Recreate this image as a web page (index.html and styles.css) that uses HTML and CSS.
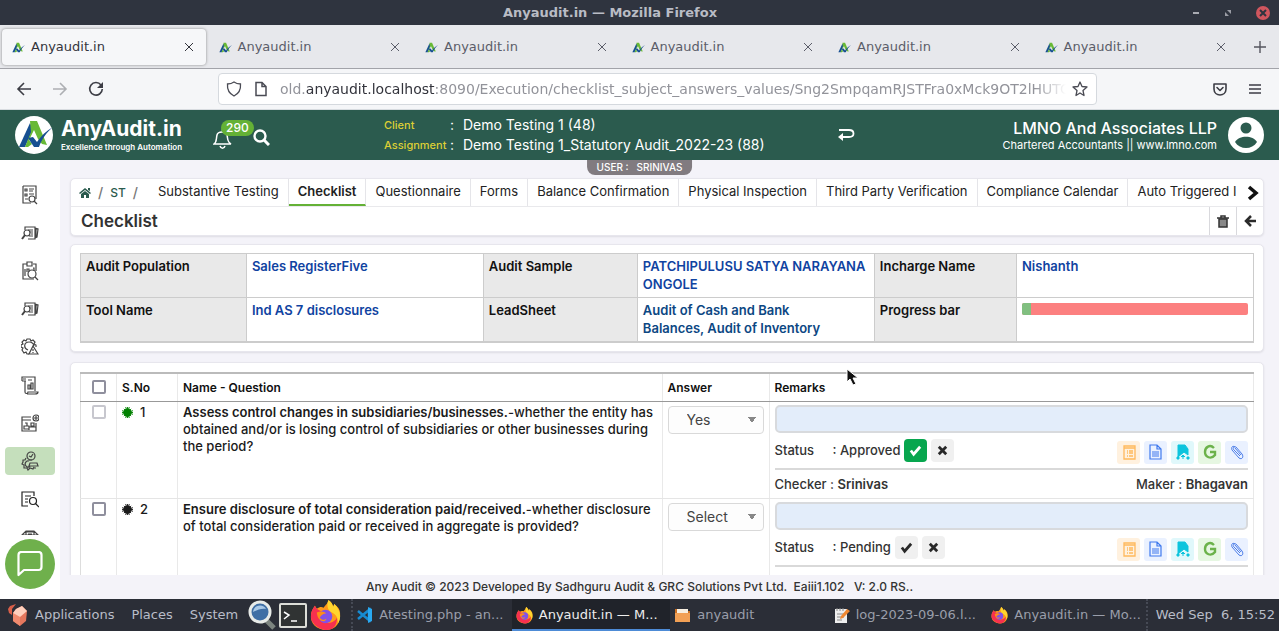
FILE: index.html
```html
<!DOCTYPE html>
<html lang="en">
<head>
<meta charset="utf-8">
<title>Anyaudit.in</title>
<link rel="stylesheet" href="styles.css">
</head>
<body>
<svg class="sprite" aria-hidden="true">
  <symbol id="logo" viewBox="0 0 38 38"><path d="M15 7 18 13 10 31H4z" fill="#164f91"/><path d="M15 5h7l10 24-5-1-4-5-4-9-5 10 3 4-4 3h-3l6-15z" fill="#68b936"/><path d="m13 22 5-1 4 5c4-6 9-11 16-15-7 6-11 12-14 20h-5z" fill="#164f91"/></symbol>
  <symbol id="mini-logo" viewBox="3 4 35 28"><use href="#logo" width="38" height="38"/></symbol>
  <symbol id="close" viewBox="0 0 10 10"><path d="m1 1 8 8M9 1 1 9" stroke="currentColor" fill="none"/></symbol>
  <symbol id="fox" viewBox="0 0 32 32"><path d="M31 13c1 10-4 18-14 18S0 24 1 16c0-4 2-7 4-10l2 3c3-2 5-2 7-1 2-3 5-5 5-8 3 2 4 4 5 7l1-3c4 3 6 6 6 9z" fill="#ff9819"/><path d="M1 16c0-4 2-7 4-10l2 3 5 3c1 5-2 9 3 11 6 2 11-1 13-5 0 8-4 13-11 13S0 24 1 16z" fill="#f7304f"/><path d="M19 0c3 2 4 4 5 7l1-3c6 5 8 14 4 20 0-7-3-10-8-12-3-2-4-8-2-12z" fill="#ffd52e"/><circle cx="16" cy="17" r="7" fill="#8151e9"/><path d="M7 13c4-2 8-1 10 1-4 0-5 2-7 4 2 3 5 3 7 1-1 5-9 4-10-6z" fill="#ff8d17"/></symbol>
  <symbol id="report" viewBox="0 0 18 20"><path d="M2 1h13v13M2 1v17h8M4 4h2v2H4zM8 4h5M8 6h4M4 9h2v2H4zM8 9h5M4 14h3"/><circle cx="11" cy="14" r="3"/><path d="m13 16 3 3"/></symbol>
  <symbol id="papers" viewBox="0 0 18 20"><path d="M4 7V4h10v12H7M14 5l3 1-1 8-2 1M15 5v10M7 7h5M9 9h3M10 11h2M8 13h4"/><circle cx="6" cy="10" r="3"/><path d="m4 12-3 4" stroke-width="2"/></symbol>
  <symbol id="clip" viewBox="0 0 18 20"><path d="M6 3H2v15h11M12 3h3v7M6 1h5v4H6zM4 8v7M6 11V8h2v3M12 7h1v3"/><circle cx="11" cy="13" r="4"/><path d="m14 16 3 3"/></symbol>
  <symbol id="risk" viewBox="0 0 18 20"><path d="M8 17H6l-1-2-2 1-2-3 1-2-2-1v-2l2-1-1-2 2-2 2 1 1-2h3l1 2 2-1 2 2-1 2 2 1v2"/><path d="M7 13c-5-2-4-8 1-8 3 0 5 2 5 4M12 9l5 8H8zM12 12v2M12 15v1"/></symbol>
  <symbol id="chart" viewBox="0 0 18 20"><path d="M1 6V2h13v14M4 6v11c0 2 3 2 3 0h10c0 2-1 2-3 2H6M1 6h4M7 14v-4h2v4zM10 14V8h2v6zM7 5h4M2 4h3"/></symbol>
  <symbol id="team" viewBox="0 0 18 20"><path d="M10 4H1v14h14v-8M1 7h9M4 10h2v3H3v3h5v-3H6M10 10h3v3h-3zM8 17v-3h7"/><circle cx="15" cy="5" r="3"/><path d="M15 3v4M13 5h4"/></symbol>
  <symbol id="gears" viewBox="0 0 18 20"><circle cx="10" cy="5" r="4"/><path d="m8 5 2 1 2-3M5 7 4 9H2v2L1 13l2 1v3h3l1 2 2-2 3 1 1-2M8 10c-3-1-5 3-3 5 1 2 4 1 4 0M9 12h7l1 3H8zM8 9h3M12 17h3"/></symbol>
  <symbol id="search-doc" viewBox="0 0 18 20"><path d="M7 17H1V3h12v4M4 7h6M4 10h3M4 13h3"/><circle cx="12" cy="12" r="3.5"/><path d="m14 14 4 4"/></symbol>
  <symbol id="burst" viewBox="0 0 12 12"><circle cx="6" cy="6" r="4.500" fill="currentColor"/><path d="M6 0v12M0 6h12M2 2l8 8M10 2l-8 8M4 0l4 12M8 0 4 12M0 4l12 4M0 8l12-4" stroke="currentColor"/></symbol>
  <symbol id="check" viewBox="0 0 14 14"><path d="m2 7 3 4 7-8" fill="none" stroke="currentColor" stroke-width="3"/></symbol>
  <symbol id="cross" viewBox="0 0 14 14"><path d="m3 3 8 8m0-8-8 8" fill="none" stroke="currentColor" stroke-width="3"/></symbol>
  <symbol id="list" viewBox="0 0 14 16"><path d="M2 2h11v13H2zM2 4h11M5 7h1M7 7h4M5 9h1M7 9h4M5 12h1M7 12h4" fill="none" stroke="#ffb95c" stroke-width="1.3"/></symbol>
  <symbol id="doc" viewBox="0 0 14 16"><path d="M1 1h7l4 4v10H1zM8 1v4h4M3 8h7M3 10h7M3 12h7" fill="none" stroke="#3e79ee" stroke-width="1.200"/></symbol>
  <symbol id="upload" viewBox="0 0 14 16"><path d="M2 1h7l3 4v6L8 8l-6 5zM1 13h2v2H1zM11 13h2v2h-2zM7 15v-4m-2 2 2-2 2 2" fill="#0cc4dd" stroke="#0cc4dd"/></symbol>
  <symbol id="google" viewBox="0 0 14 16"><path d="M11 4C7 0 2 3 2 8s6 8 10 3V8H7" fill="none" stroke="#6bb24a" stroke-width="2.4"/></symbol>
  <symbol id="attach" viewBox="0 0 14 16"><path d="M5 3c-3-2-4 1-3 3l7 8c3 2 5-1 3-4L6 3c-2-1-4 1-2 3l6 6M5 4l6 7" fill="none" stroke="#4b7de9"/></symbol>
</svg>

<header class="titlebar">
  <span class="titlebar-text">Anyaudit.in — Mozilla Firefox</span>
  <div class="window-buttons">
    <button aria-label="Minimize"><svg width="8" height="10"><path d="M1 5h6" stroke="#a9abb2" stroke-width="2"/></svg></button>
    <button aria-label="Restore"><svg width="8" height="8"><path d="M3 1h4v4zM1 3l4 4H1z" fill="#9b9da5"/></svg></button>
    <button aria-label="Close window"><svg width="14" height="14"><circle cx="7" cy="7" r="7" fill="#d0565e"/><path d="m4 4 6 6m0-6-6 6" stroke="#2f343f" stroke-width="2"/></svg></button>
  </div>
</header>

<nav class="browser-tabs" aria-label="Browser tabs">
  <div class="browser-tab current"><svg class="favicon"><use href="#mini-logo"/></svg><span>Anyaudit.in</span><button aria-label="Close tab"><svg><use href="#close"/></svg></button></div>
  <div class="browser-tab"><svg class="favicon"><use href="#mini-logo"/></svg><span>Anyaudit.in</span><button aria-label="Close tab"><svg><use href="#close"/></svg></button></div>
  <div class="browser-tab"><svg class="favicon"><use href="#mini-logo"/></svg><span>Anyaudit.in</span><button aria-label="Close tab"><svg><use href="#close"/></svg></button></div>
  <div class="browser-tab"><svg class="favicon"><use href="#mini-logo"/></svg><span>Anyaudit.in</span><button aria-label="Close tab"><svg><use href="#close"/></svg></button></div>
  <div class="browser-tab"><svg class="favicon"><use href="#mini-logo"/></svg><span>Anyaudit.in</span><button aria-label="Close tab"><svg><use href="#close"/></svg></button></div>
  <div class="browser-tab"><svg class="favicon"><use href="#mini-logo"/></svg><span>Anyaudit.in</span><button aria-label="Close tab"><svg><use href="#close"/></svg></button></div>
  <button class="new-tab" aria-label="New tab"><svg width="12" height="12"><path d="M6 0v12M0 6h12" stroke="#55565f" stroke-width="1.4"/></svg></button>
</nav>

<div class="toolbar">
  <div class="nav-buttons">
    <button aria-label="Back"><svg width="16" height="16"><path d="M15 8H2m6-6L2 8l6 6" fill="none" stroke="#3c3d45" stroke-width="1.6"/></svg></button>
    <button aria-label="Forward"><svg width="16" height="16"><path d="M1 8h13M8 2l6 6-6 6" fill="none" stroke="#adafb3" stroke-width="1.6"/></svg></button>
    <button aria-label="Reload"><svg width="16" height="16"><path d="M13 4a6.300 6.300 0 1 0 1.300 4" fill="none" stroke="#3c3d45" stroke-width="1.6"/><path d="M15 1v6H9z" fill="#3c3d45"/></svg></button>
  </div>
  <div class="address">
    <svg width="16" height="16"><path d="M8 1c2 1.500 4 2 6.500 2C15 9 12 13 8 15 4 13 1 9 1.500 3 4 3 6 2.500 8 1z" fill="none" stroke="#4a4b54" stroke-width="1.300"/></svg>
    <svg width="14" height="16"><path d="M2 1.500h6l4 4v9H2zM8 1.500v4h4" fill="none" stroke="#4a4b54" stroke-width="1.500"/></svg>
    <div class="url">old.<b>anyaudit.localhost</b>:8090/Execution/checklist_subject_answers_values/Sng2SmpqamRJSTFra0xMck9OT2lHUTC</div>
    <button aria-label="Bookmark"><svg width="16" height="16"><path d="m8 1 2 4.500 5 .5-4 3.500 1 5L8 12l-4 2.500 1-5L1 6l5-.5z" fill="none" stroke="#4a4b54" stroke-width="1.300" stroke-linejoin="round"/></svg></button>
  </div>
  <div class="tool-buttons">
    <button aria-label="Pocket"><svg width="14" height="14"><path d="M1 2h12v5c0 4-3 6-6 6s-6-2-6-6zM4 5.500l3 3 3-3" fill="none" stroke="#3c3d45" stroke-width="1.600" stroke-linecap="round" stroke-linejoin="round"/></svg></button>
    <button aria-label="Menu"><svg width="12" height="12"><path d="M0 2h12M0 6h12M0 10h12" stroke="#3c3d45" stroke-width="1.500"/></svg></button>
  </div>
</div>

<header class="app-header">
  <a class="brand" href="#">
    <span class="brand-mark"><svg><use href="#logo"/></svg></span>
    <span class="brand-words"><strong>AnyAudit.in</strong><small>Excellence through Automation</small></span>
  </a>
  <div class="header-tools">
    <button class="bell" aria-label="Notifications"><svg width="19" height="24"><path d="M1 18c3-2 2-5 3-9 1-4 9-4 10 0 1 4 0 7 4 9zM7 20c1 3 4 3 5 0M9.500 5V3" fill="none" stroke="#fff" stroke-width="1.500"/></svg><span class="badge">290</span></button>
    <button aria-label="Search"><svg width="17" height="17"><circle cx="7" cy="7" r="5.500" fill="none" stroke="#fff" stroke-width="2.400"/><path d="m11 11 5 5" stroke="#fff" stroke-width="3"/></svg></button>
  </div>
  <dl class="engagement">
    <dt>Client</dt><dd><span>:</span>Demo Testing 1 (48)</dd>
    <dt>Assignment</dt><dd><span>:</span>Demo Testing 1_Statutory Audit_2022-23 (88)</dd>
  </dl>
  <button class="switch" aria-label="Switch assignment"><svg width="17" height="16"><path d="M1 3h10c6 0 6 7 0 7H4" fill="none" stroke="#fff" stroke-width="1.800"/><path d="M0 10 5 6v8z" fill="#fff"/></svg></button>
  <div class="firm"><strong>LMNO And Associates LLP</strong><small>Chartered Accountants || www.lmno.com</small></div>
  <button class="avatar" aria-label="Profile"><svg width="36" height="36"><circle cx="18" cy="18" r="18" fill="#fff"/><circle cx="18" cy="11" r="5.500" fill="#2b5b4e"/><path d="M7 25c4-7 18-7 22 0-5 8-17 8-22 0z" fill="#2b5b4e"/></svg></button>
  <div class="user-chip">USER :&nbsp;&nbsp; SRINIVAS</div>
</header>

<div class="workspace">
  <aside class="sidebar">
    <nav class="side-nav" aria-label="Sections">
      <a href="#" aria-label="Reports"><svg><use href="#report"/></svg></a>
      <a href="#" aria-label="Papers"><svg><use href="#papers"/></svg></a>
      <a href="#" aria-label="Analysis"><svg><use href="#clip"/></svg></a>
      <a href="#" aria-label="Review"><svg><use href="#papers"/></svg></a>
      <a href="#" aria-label="Risk"><svg><use href="#risk"/></svg></a>
      <a href="#" aria-label="Statements"><svg><use href="#chart"/></svg></a>
      <a href="#" aria-label="Team"><svg><use href="#team"/></svg></a>
      <a href="#" aria-label="Execution" class="active"><svg><use href="#gears"/></svg></a>
      <a href="#" aria-label="Search documents" class="dark"><svg><use href="#search-doc"/></svg></a>
      <a href="#" aria-label="Archive"><svg viewBox="0 0 18 20"><path d="M1 8 5 4h8l4 4M5 8V5h8v3M7 7h4M1 8h16v5H1z"/></svg></a>
    </nav>
    <button class="chat" aria-label="Chat"><svg width="26" height="26"><path d="M1.500 24V4c0-2 1-3 3-3h17c2 0 3 1 3 3v12c0 2-1 3-3 3H7z" fill="none" stroke="#fff" stroke-width="2.200" stroke-linejoin="round"/></svg></button>
  </aside>

  <main class="main">
    <div class="content">
      <section class="card page-head">
        <div class="section-row">
          <div class="crumbs"><a href="#" aria-label="Home"><svg width="12" height="10"><path d="m6 0 6 5-1 1-5-4-5 4-1-1zM6 3l4 3v4H7V7H5v3H2V6zM9 0h2v3L9 2z" fill="#2b5b4e"/></svg></a><i>/</i><a href="#">ST</a><i>/</i></div>
          <nav class="section-tabs" aria-label="Audit sections">
            <a href="#">Substantive Testing</a><a href="#" class="selected">Checklist</a><a href="#">Questionnaire</a><a href="#">Forms</a><a href="#">Balance Confirmation</a><a href="#">Physical Inspection</a><a href="#">Third Party Verification</a><a href="#">Compliance Calendar</a><a href="#">Auto Triggered I</a>
          </nav>
          <button class="scroll-right" aria-label="More sections"><svg width="12" height="16"><path d="m2 2 7 6-7 6" fill="none" stroke="#111" stroke-width="3.500"/></svg></button>
        </div>
        <div class="title-row">
          <h1>Checklist</h1>
          <button aria-label="Delete"><svg width="12" height="13"><path d="M2 4h8v8H2z" fill="#888" stroke="#333" stroke-width="1.500"/><path d="M0 3h12M4 3V1h4v2" fill="none" stroke="#333" stroke-width="1.500"/></svg></button>
          <button aria-label="Go back"><svg width="12" height="12"><path d="M12 6H3m4-5L2 6l5 5" fill="none" stroke="#2b2b2b" stroke-width="2.500"/></svg></button>
        </div>
      </section>

      <section class="card">
        <table class="info">
          <colgroup><col class="w14"><col class="w20"><col class="w13"><col class="w20"><col class="w12"><col class="w20"></colgroup>
          <tr><th scope="row">Audit Population</th><td>Sales RegisterFive</td><th scope="row">Audit Sample</th><td>PATCHIPULUSU SATYA NARAYANA ONGOLE</td><th scope="row">Incharge Name</th><td>Nishanth</td></tr>
          <tr><th scope="row">Tool Name</th><td>Ind AS 7 disclosures</td><th scope="row">LeadSheet</th><td class="deep">Audit of Cash and Bank<br>Balances, Audit of Inventory</td><th scope="row">Progress bar</th><td><div class="progress"><div class="progress-done" style="width:4%"></div></div></td></tr>
        </table>
      </section>

      <section class="card">
        <table class="questions">
          <colgroup><col class="c-check"><col class="c-no"><col><col class="c-answer"><col></colgroup>
          <thead><tr><th><input type="checkbox" aria-label="Select all"></th><th>S.No</th><th>Name - Question</th><th>Answer</th><th>Remarks</th></tr></thead>
          <tbody>
            <tr>
              <td><input type="checkbox" aria-label="Select question 1" disabled></td>
              <td><span class="serial ok"><svg><use href="#burst"/></svg>1</span></td>
              <td><b>Assess control changes in subsidiaries/businesses.</b>-whether the entity has obtained and/or is losing control of subsidiaries or other businesses during the period?</td>
              <td><select aria-label="Answer 1"><option>Yes</option></select></td>
              <td>
                <input class="remark" type="text" aria-label="Remarks 1">
                <div class="status"><span class="status-label">Status</span><span>: Approved</span><button class="mark on" aria-label="Approve"><svg><use href="#check"/></svg></button><button class="mark" aria-label="Reject"><svg><use href="#cross"/></svg></button>
                  <div class="actions"><button class="a-orange" aria-label="List"><svg><use href="#list"/></svg></button><button class="a-blue" aria-label="Document"><svg><use href="#doc"/></svg></button><button class="a-cyan" aria-label="Upload"><svg><use href="#upload"/></svg></button><button class="a-green" aria-label="Google"><svg><use href="#google"/></svg></button><button class="a-blue" aria-label="Attach"><svg><use href="#attach"/></svg></button></div>
                </div>
                <div class="people"><span>Checker : <b>Srinivas</b></span><span>Maker : <b>Bhagavan</b></span></div>
              </td>
            </tr>
            <tr>
              <td><input type="checkbox" aria-label="Select question 2"></td>
              <td><span class="serial"><svg><use href="#burst"/></svg>2</span></td>
              <td><b>Ensure disclosure of total consideration paid/received.</b>-whether disclosure of total consideration paid or received in aggregate is provided?</td>
              <td><select aria-label="Answer 2"><option>Select</option></select></td>
              <td>
                <input class="remark" type="text" aria-label="Remarks 2">
                <div class="status"><span class="status-label">Status</span><span>: Pending</span><button class="mark" aria-label="Approve"><svg><use href="#check"/></svg></button><button class="mark" aria-label="Reject"><svg><use href="#cross"/></svg></button>
                  <div class="actions"><button class="a-orange" aria-label="List"><svg><use href="#list"/></svg></button><button class="a-blue" aria-label="Document"><svg><use href="#doc"/></svg></button><button class="a-cyan" aria-label="Upload"><svg><use href="#upload"/></svg></button><button class="a-green" aria-label="Google"><svg><use href="#google"/></svg></button><button class="a-blue" aria-label="Attach"><svg><use href="#attach"/></svg></button></div>
                </div>
              </td>
            </tr>
          </tbody>
        </table>
      </section>
    </div>
    <footer class="copyright">Any Audit © 2023 Developed By Sadhguru Audit &amp; GRC Solutions Pvt Ltd.&nbsp; Eaiii1.102 &nbsp; V: 2.0 RS..</footer>
  </main>
</div>

<footer class="taskbar">
  <div class="menus">
    <svg width="19" height="22"><path d="m8 5 6-3 5 5-1 10-6 5-7-5V9z" fill="#e5775d"/><path d="m5 9 7 4v9l-7-5z" fill="#f18b6f"/><path d="m5 9 3-4 6-3 5 5-7 6z" fill="#ffd0bd"/><path d="m0 5 2-3 6-2-4 5v6L1 9z" fill="#d95f49"/></svg>
    <button>Applications</button><button>Places</button><button>System</button>
  </div>
  <div class="launchers">
    <button aria-label="Finder"><svg width="28" height="30"><path d="m17 19 9 9" stroke="#7c847f" stroke-width="5"/><circle cx="12" cy="12" r="10" fill="#3f6fa5" stroke="#e8ebe8" stroke-width="3"/><path d="M5 12c1-8 11-8 13-3-4-1-9 1-13 3z" fill="#a8c8e6"/></svg></button>
    <button aria-label="Terminal"><svg width="30" height="30"><rect x="1" y="3" width="28" height="25" rx="2" fill="#ddded8"/><rect x="3" y="5" width="24" height="21" fill="#303333"/><path d="m6 12 5 3-5 4M13 21h6" fill="none" stroke="#fff" stroke-width="1.500"/></svg></button>
    <button aria-label="Firefox"><svg width="31" height="31"><use href="#fox"/></svg></button>
  </div>
  <div class="tasks">
    <button><svg width="16" height="16"><path d="m1 4 11 9V3L1 12" fill="none" stroke="#168bd2" stroke-width="2.500"/><path d="m11 0 4 2v12l-4 2z" fill="#29a9f2"/></svg><span>Atesting.php - an...</span></button>
    <button class="active"><svg width="17" height="17"><use href="#fox"/></svg><span>Anyaudit.in — M...</span></button>
    <button><svg width="17" height="17"><path d="M1 2h6l1 2h8v10H1z" fill="#c96f23"/><path d="M3 2h11v5H3z" fill="#f7eee0"/><path d="M1 6h15v9H1z" fill="#f2a055"/></svg><span>anyaudit</span></button>
    <button><svg width="17" height="17"><path d="M2 2h12v14H2z" fill="#eee"/><path d="M4 1v3M7 1v3M10 1v3M4 7h8M4 10h7M4 13h5" stroke="#888"/><path d="m7 12 1-3 6-7 3 2-7 7z" fill="#f18830"/></svg><span>log-2023-09-06.l...</span></button>
    <button><svg width="17" height="17"><use href="#fox"/></svg><span>Anyaudit.in — Mo...</span></button>
  </div>
  <time class="clock">Wed Sep&nbsp; 6, 15:52</time>
</footer>
<svg class="pointer" width="13" height="18" aria-hidden="true"><path d="M1 1v13l3-3 3 6 3-1-3-6h5z" fill="#111" stroke="#fff"/></svg>
</body>
</html>
```
FILE: styles.css
```css
* { box-sizing: border-box; }
body { margin: 0; height: 100vh; display: flex; flex-direction: column; overflow: hidden; background: #f4f3f9; color: #222; font: 500 13px/18px Inter, "Open Sans", sans-serif; }
button { padding: 0; border: 0; background: none; color: inherit; font: inherit; display: flex; align-items: center; justify-content: center; }
a { color: inherit; text-decoration: none; }
svg { flex: none; display: block; }
.sprite { position: absolute; width: 0; height: 0; }

.titlebar, .browser-tabs, .toolbar, .taskbar { font-family: "DejaVu Sans", sans-serif; font-weight: 400; flex: none; }
.titlebar { display: flex; align-items: center; height: 25px; padding: 0 9px 0 28px; background: #2f343f; color: #b9bcc5; font-size: 13px; font-weight: 700; }
.titlebar-text { flex: 1; text-align: center; }
.window-buttons { display: flex; gap: 24px; }

.browser-tabs { display: flex; height: 44px; padding: 4px 0 3px 2px; background: #e7e8ec; border-bottom: 1px solid #a2a3a9; color: #5b5d69; font-size: 13px; }
.browser-tab { flex: 1; display: flex; align-items: center; gap: 6px; margin-right: 3px; padding: 0 12px 0 10px; border-radius: 4px; }
.browser-tab span { flex: 1; }
.browser-tab button svg { width: 10px; height: 10px; }
.browser-tab.current { background: #f6f7f9; color: #33343c; box-shadow: 0 0 3px #888; }
.favicon { width: 13px; height: 13px; }
.new-tab { width: 38px; }

.toolbar { display: flex; align-items: center; height: 41px; padding: 0 18px 0 16px; background: #f5f6f8; border-bottom: 1px solid #d8dce0; }
.nav-buttons { display: flex; gap: 20px; width: 202px; }
.address { display: flex; align-items: center; gap: 12px; flex: 1; min-width: 0; height: 32px; padding: 0 8px 0 7px; background: #fff; border: 1px solid #d5d9de; border-radius: 4px; }
.address button { margin-left: -6px; }
.url { flex: 1; overflow: hidden; white-space: nowrap; color: #92939a; font-size: 14px; mask-image: linear-gradient(90deg, #000 96%, transparent); }
.url b { font-weight: 400; color: #33343c; }
.tool-buttons { display: flex; justify-content: flex-end; gap: 22px; width: 164px; }

.app-header { position: relative; flex: none; display: flex; align-items: center; height: 50px; padding: 0 15px; background: #2b5b4e; color: #fff; }
.brand { display: flex; align-items: center; gap: 8px; width: 198px; }
.brand-mark { width: 38px; height: 38px; border-radius: 50%; background: #fff; overflow: hidden; }
.brand-mark svg { width: 38px; height: 38px; }
.brand-words, .firm { display: flex; flex-direction: column; }
.brand-words strong { font-size: 21px; line-height: 24px; font-weight: 700; }
.brand-words small { font-size: 8px; line-height: 12px; font-weight: 600; }
.header-tools { display: flex; align-items: center; gap: 21px; width: 171px; }
.header-tools button { padding-top: 5px; }
.bell { position: relative; }
.badge { position: absolute; left: 8px; top: -1px; padding: 0 5px; border-radius: 8px; background: #64b136; font-size: 12px; line-height: 16px; }
.engagement { display: grid; grid-template-columns: 66px auto; row-gap: 2px; margin: 0; white-space: nowrap; }
.engagement dt { color: #ddcf35; font-size: 11px; }
.engagement dd { display: flex; margin: 0; font-size: 14px; font-weight: 400; }
.engagement dd span { width: 13px; }
.switch { margin: 0 auto 0 73px; }
.firm { align-items: flex-end; }
.firm strong { font-size: 16px; line-height: 20px; font-weight: 500; }
.firm small { font-size: 11px; line-height: 14px; font-weight: 400; }
.avatar { margin-left: 11px; }
.user-chip { position: absolute; top: 100%; left: 50%; transform: translateX(-50%); z-index: 2; padding: 0 10px; border-radius: 0 0 8px 8px; background: #817b80; font-size: 10px; line-height: 15px; }

.workspace { flex: 1; min-height: 0; display: flex; }
.sidebar { position: relative; flex: none; width: 60px; padding: 21px 5px 64px; background: #fff; overflow: hidden; }
.side-nav { display: flex; flex-direction: column; gap: 10px; height: 100%; overflow: hidden; }
.side-nav a { flex: none; display: flex; align-items: center; justify-content: center; height: 28px; border-radius: 4px; color: #444; }
.side-nav a.dark { color: #222; }
.side-nav .active { background: #c5dfbc; }
.side-nav svg { width: 18px; height: 20px; fill: none; stroke: currentColor; stroke-width: 1.2; }
.chat { position: absolute; left: 5px; bottom: 10px; width: 50px; height: 50px; border-radius: 50%; background: #6fb04c; }
.main { flex: 1; min-width: 0; display: flex; flex-direction: column; }
.content { flex: 1; min-height: 0; overflow: hidden; padding: 18px 15px 0 10px; display: flex; flex-direction: column; gap: 8px; }
.card { flex: none; padding: 8px 9px; background: #fff; border: 1px solid #e7e6ed; border-radius: 5px; box-shadow: 0 1px 2px #dddce3; }
.card:last-child { padding-top: 9px; margin-top: 2px; }

.content .page-head { padding: 0; }
.section-row { display: flex; height: 28px; border-bottom: 1px solid #e9e9ec; }
.crumbs { display: flex; align-items: center; gap: 7px; width: 78px; padding-left: 8px; color: #2b5b4e; font-size: 12px; }
.crumbs i { color: #777; font-size: 14px; font-style: normal; }
.section-tabs { flex: 1; display: flex; overflow: hidden; white-space: nowrap; font-size: 13px; font-weight: 400; line-height: 25px; }
.section-tabs a { padding: 0 9px; border-right: 1px solid #e5e5e9; }
.section-tabs a:last-child { padding-right: 0; border-right: 0; }
.section-tabs .selected { border-bottom: 2px solid #64b136; font-weight: 600; }
.scroll-right { width: 21px; }
.title-row { display: flex; height: 28px; padding-left: 10px; }
.title-row h1 { flex: 1; margin: 0; font-size: 17px; line-height: 28px; font-weight: 600; color: #333; }
.title-row button { width: 27px; border-left: 1px solid #d9d9dd; }

table { width: 100%; border-collapse: collapse; table-layout: fixed; }
th { text-align: left; font-weight: 600; }
th, td { vertical-align: top; }
.info { border: 1px solid #ccc; border-bottom-width: 2px; }
.info th, .info td { height: 44px; padding: 3px 5px; border: 1px solid #ccc; font-weight: 600; }
.info th { background: #e9e9e9; color: #111; }
.info td { color: #1043a1; }
.info td.deep { color: #0c4783; }
.w14 { width: 14%; }
.w20 { width: 20%; }
.w13 { width: 13%; }
.w12 { width: 12%; }
.progress { height: 12px; margin-top: 2px; border-radius: 2px; overflow: hidden; background: #fc8080; }
.progress-done { height: 100%; background: #81bf80; }

.questions { border: 1px solid #ddd; border-top: 2px solid #bbb; color: #1a1a1a; font-size: 13px; line-height: 17px; }
.c-check { width: 36px; }
.c-no { width: 61px; }
.c-answer { width: 107px; }
.questions th { height: 28px; padding: 5px 5px; border-right: 1px solid #e9e9e9; border-bottom: 1px solid #999; font-size: 12px; color: #111; }
.questions td { height: 96px; padding: 2px 5px 0; border-right: 1px solid #e9e9e9; border-bottom: 1px solid #e5e5e5; }
.questions td b { font-weight: 600; }
.questions input[type="checkbox"] { appearance: none; display: block; width: 14px; height: 14px; margin: 1px auto; border: 2px solid #8f8f9d; border-radius: 2px; background: #fff; }
.questions input[type="checkbox"]:disabled { border-color: #c7c7ce; }
.serial { display: flex; align-items: center; gap: 7px; }
.serial svg { width: 11px; height: 11px; }
.serial.ok svg { color: #008000; }
select { appearance: none; width: 100%; height: 28px; margin-top: 2px; padding: 0 18px; border: 1px solid #d9d9d9; border-radius: 4px; background: linear-gradient(to bottom right, #888 50%, transparent 50%) right 7px center / 4px 6px no-repeat, linear-gradient(to bottom left, #888 50%, transparent 50%) right 11px center / 4px 6px no-repeat, #fdfdfd; color: #444; font: 400 14px/24px Inter, sans-serif; }
.remark { display: block; width: 100%; height: 28px; margin-top: 1px; padding: 0 6px; border: 2px solid #d8dadd; border-radius: 5px; background: #e3edfa; font: inherit; }
.status { display: flex; align-items: center; height: 37px; color: #333; font-size: 13px; border-bottom: 2px solid #d9d9d9; }
.status-label { width: 58px; }
.mark { width: 23px; height: 23px; margin-left: 4px; border-radius: 4px; background: #f0f0f0; color: #282828; }
.mark svg { width: 13px; height: 13px; }
.mark.on { background: #07a64e; color: #fff; }
.actions { display: flex; gap: 4px; margin-left: auto; padding-top: 4px; }
.actions button { width: 23px; height: 23px; border-radius: 3px; }
.actions svg { width: 14px; height: 16px; }
.a-orange { background: #fff1df; }
.a-blue { background: #eaf1ff; }
.a-cyan { background: #e0f8fb; }
.a-green { background: #e6f7e2; }
.people { display: flex; justify-content: space-between; color: #333; font-size: 13px; line-height: 28px; }
.copyright { flex: none; padding: 3px 60px 3px 0; text-align: center; font-size: 12px; line-height: 18px; color: #333; }

.taskbar { display: flex; align-items: center; height: 32px; padding: 0 4px 0 8px; background: #2b2e37; color: #b9bdc8; font-size: 13px; }
.menus { display: flex; align-items: center; gap: 17px; }
.menus svg { margin-right: -9px; }
.launchers { display: flex; align-items: center; gap: 2px; padding: 0 10px; }
.tasks { flex: 1; min-width: 0; display: flex; align-self: stretch; border-left: 2px dotted #464a55; border-right: 2px dotted #464a55; }
.tasks button { flex: 1; justify-content: flex-start; gap: 6px; padding: 0 4px; color: #9a9eaa; white-space: nowrap; }
.tasks .active { background: #20232a; color: #eee; box-shadow: inset 0 -2px #4d8bd6; }
.clock { padding-left: 8px; white-space: nowrap; }
.pointer { position: absolute; left: 846px; top: 368px; z-index: 5; }
```
